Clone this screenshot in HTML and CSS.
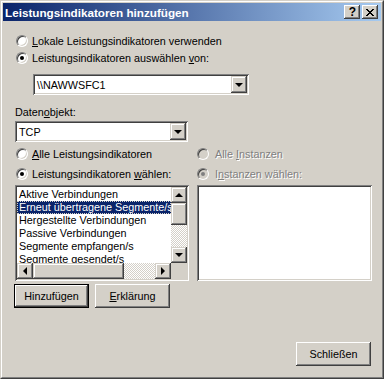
FILE: index.html
```html
<!DOCTYPE html>
<html lang="de">
<head>
    <meta charset="UTF-8">
    <title>Leistungsindikatoren hinzufügen</title>
    <link rel="stylesheet" href="styles.css">
</head>
<body>
    <div class="window">
        <div class="frame">
            <div class="titlebar">
                <span class="title">Leistungsindikatoren hinzufügen</span>
                <div class="title-btn help-btn">?</div>
                <div class="title-btn close-btn">
                    <svg width="8" height="7" viewBox="0 0 8 7"><path d="M0 0h2v1h-2zM6 0h2v1h-2zM1 1h2v1h-2zM5 1h2v1h-2zM2 2h4v1h-4zM3 3h2v1h-2zM2 4h4v1h-4zM1 5h2v1h-2zM5 5h2v1h-2zM0 6h2v1h-2zM6 6h2v1h-2z" fill="#000"/></svg>
                </div>
            </div>

            <div class="content">
                <div class="row row-local">
                    <span class="radio"></span>
                    <span><u>L</u>okale Leistungsindikatoren verwenden</span>
                </div>
                <div class="row row-remote">
                    <span class="radio checked"></span>
                    <span>Leistungsindikatoren auswählen <u>v</u>on:</span>
                </div>

                <div class="combo combo-machine">
                    <span class="combo-text">\\NAWWSFC1</span>
                    <span class="drop-btn"><span class="arrow-down"></span></span>
                </div>

                <div class="label">Daten<u>o</u>bjekt:</div>
                <div class="combo combo-object">
                    <span class="combo-text">TCP</span>
                    <span class="drop-btn"><span class="arrow-down"></span></span>
                </div>

                <div class="columns">
                    <div class="col">
                        <div class="row">
                            <span class="radio"></span>
                            <span><u>A</u>lle Leistungsindikatoren</span>
                        </div>
                        <div class="row row-second">
                            <span class="radio checked"></span>
                            <span>Leistungsindikatoren <u>w</u>ählen:</span>
                        </div>
                        <div class="listbox">
                            <div class="list-main">
                                <div class="items">
                                    <div class="item">Aktive Verbindungen</div>
                                    <div class="item selected">Erneut übertragene Segmente/s</div>
                                    <div class="item">Hergestellte Verbindungen</div>
                                    <div class="item">Passive Verbindungen</div>
                                    <div class="item">Segmente empfangen/s</div>
                                    <div class="item">Segmente gesendet/s</div>
                                </div>
                                <div class="vscroll">
                                    <span class="sb-btn"><span class="arrow-up"></span></span>
                                    <span class="sb-thumb"></span>
                                    <span class="sb-track"></span>
                                    <span class="sb-btn"><span class="arrow-down"></span></span>
                                </div>
                            </div>
                            <div class="hscroll">
                                <span class="sb-btn"><span class="arrow-left"></span></span>
                                <span class="sb-thumb h-thumb"></span>
                                <span class="sb-track"></span>
                                <span class="sb-btn"><span class="arrow-right"></span></span>
                                <span class="sb-corner"></span>
                            </div>
                        </div>
                    </div>
                    <div class="col col-right">
                        <div class="row disabled">
                            <span class="radio"></span>
                            <span>Alle <u>I</u>nstanzen</span>
                        </div>
                        <div class="row row-second disabled">
                            <span class="radio checked"></span>
                            <span>I<u>n</u>stanzen wählen:</span>
                        </div>
                        <div class="listbox listbox-empty"></div>
                    </div>
                </div>

                <div class="buttons">
                    <button class="btn default">Hinzufügen</button>
                    <button class="btn"><u>E</u>rklärung</button>
                </div>

                <button class="btn close">Schließen</button>
            </div>
        </div>
    </div>
</body>
</html>
```

FILE: styles.css
```css
html, body {
    margin: 0;
    padding: 0;
    background: #d4d0c8;
}
body {
    font-family: "Liberation Sans", Arial, sans-serif;
    font-size: 10.8px;
    color: #000;
}
u {
    text-decoration-thickness: 1px;
    text-underline-offset: 1px;
}

/* Fensterrahmen */
.window {
    width: 384px;
    height: 379px;
    box-sizing: border-box;
    border: 1px solid;
    border-color: #d4d0c8 #404040 #404040 #d4d0c8;
    background: #d4d0c8;
}
.frame {
    height: 100%;
    box-sizing: border-box;
    border: 1px solid;
    border-color: #fff #808080 #808080 #fff;
    padding: 1px;
    display: flex;
    flex-direction: column;
}
.titlebar {
    height: 18px;
    flex: none;
    display: flex;
    align-items: center;
    padding: 0 3px 0 2px;
    background: linear-gradient(to right, #0a246a, #a6caf0);
}
.title {
    flex: 1;
    color: #fff;
    font-weight: bold;
    font-size: 11.7px;
    white-space: nowrap;
}
.title-btn {
    width: 16px;
    height: 14px;
    box-sizing: border-box;
    display: flex;
    align-items: center;
    justify-content: center;
    background: #d4d0c8;
    box-shadow: inset -1px -1px #404040, inset 1px 1px #fff, inset -2px -2px #808080;
}
.help-btn {
    font-weight: bold;
    font-size: 12px;
    line-height: 14px;
    margin-right: 2px;
    padding-left: 1px;
}
.close-btn svg {
    display: block;
    margin-left: 0;
}

/* Inhalt */
.content {
    flex: 1;
    display: flex;
    flex-direction: column;
    padding-left: 12px;
}
.row {
    height: 14px;
    display: flex;
    align-items: center;
    gap: 4px;
    white-space: nowrap;
}
.row-local { margin-top: 13px; }
.row-remote { margin-top: 3px; }
.row-second { margin-top: 6px; }

.radio {
    width: 12px;
    height: 12px;
    box-sizing: border-box;
    margin-left: 1px;
    border-radius: 50%;
    border: 1px solid;
    border-color: #808080 #fff #fff #808080;
    background: #fff;
    box-shadow: inset 1px 1px #404040, inset -1px -1px #d4d0c8;
    position: relative;
    flex: none;
}
.radio.checked::after {
    content: "";
    position: absolute;
    left: 3px;
    top: 3px;
    width: 4px;
    height: 4px;
    border-radius: 50%;
    background: #000;
}
.disabled { color: #808080; text-shadow: 1px 1px #fff; }
.disabled .radio { background: #d4d0c8; }
.disabled .radio.checked::after { background: #808080; }

.combo {
    height: 21px;
    box-sizing: border-box;
    display: flex;
    align-items: center;
    background: #fff;
    box-shadow: inset 1px 1px #808080, inset -1px -1px #fff, inset 2px 2px #404040, inset -2px -2px #d4d0c8;
    padding: 2px;
}
.combo-text { flex: 1; padding-left: 2px; }
.combo-machine { margin: 9px 0 0 18px; width: 216px; }
.combo-object { margin-top: 2px; width: 173px; }

.drop-btn, .sb-btn {
    width: 16px;
    height: 17px;
    box-sizing: border-box;
    display: flex;
    align-items: center;
    justify-content: center;
    background: #d4d0c8;
    box-shadow: inset -1px -1px #404040, inset 1px 1px #d4d0c8, inset -2px -2px #808080, inset 2px 2px #fff;
    flex: none;
}
.arrow-down, .arrow-up, .arrow-left, .arrow-right {
    width: 0;
    height: 0;
    border: 0 solid transparent;
}
.arrow-down { border-width: 4px 4px 0 4px; border-top-color: #000; }
.arrow-up { border-width: 0 4px 4px 4px; border-bottom-color: #000; }
.arrow-left { border-width: 4px 4px 4px 0; border-right-color: #000; }
.arrow-right { border-width: 4px 0 4px 4px; border-left-color: #000; }

.label {
    margin-top: 10px;
    height: 14px;
    line-height: 14px;
}

/* Zwei Spalten */
.columns {
    display: flex;
    margin-top: 5px;
    gap: 8px;
}
.col { width: 174px; display: flex; flex-direction: column; }
.col-right { width: 175px; }
.col-right .radio { margin-left: 0; }
.col-right .row { gap: 6px; }

.listbox {
    margin-top: 4px;
    height: 96px;
    box-sizing: border-box;
    padding: 2px;
    background: #fff;
    box-shadow: inset 1px 1px #808080, inset -1px -1px #fff, inset 2px 2px #404040, inset -2px -2px #d4d0c8;
    display: flex;
    flex-direction: column;
}
.list-main { flex: 1; display: flex; min-height: 0; }
.items {
    flex: 1;
    overflow: hidden;
    padding-top: 1px;
}
.item {
    height: 13px;
    line-height: 13px;
    padding-left: 2px;
    white-space: nowrap;
    overflow: hidden;
}
.item.selected {
    background: #0a246a;
    color: #fff;
    outline: 1px dotted #d4d0c8;
    outline-offset: -1px;
}
.vscroll {
    width: 16px;
    display: flex;
    flex-direction: column;
}
.vscroll .sb-btn { height: 16px; }
.sb-thumb {
    height: 22px;
    flex: none;
    background: #d4d0c8;
    box-shadow: inset -1px -1px #404040, inset 1px 1px #d4d0c8, inset -2px -2px #808080, inset 2px 2px #fff;
}
.sb-track {
    flex: 1;
    background: repeating-conic-gradient(#d4d0c8 0 25%, #fff 0 50%) 0 0 / 2px 2px;
}
.hscroll {
    height: 16px;
    display: flex;
    flex: none;
}
.hscroll .sb-btn { height: 16px; }
.h-thumb { width: 91px; height: 16px; }
.sb-corner { width: 16px; background: #d4d0c8; }

/* Schaltflächen */
.buttons {
    display: flex;
    gap: 6px;
    margin: 3px 0 0 -1px;
}
.btn {
    width: 75px;
    height: 24px;
    box-sizing: border-box;
    font-family: inherit;
    font-size: inherit;
    color: #000;
    background: #d4d0c8;
    border: none;
    padding: 0;
    box-shadow: inset -1px -1px #404040, inset 1px 1px #fff, inset -2px -2px #808080, inset 2px 2px #d4d0c8;
}
.btn.default {
    border: 1px solid #000;
}
.btn.close {
    align-self: flex-end;
    margin: 34px 10px 0 0;
}
```
